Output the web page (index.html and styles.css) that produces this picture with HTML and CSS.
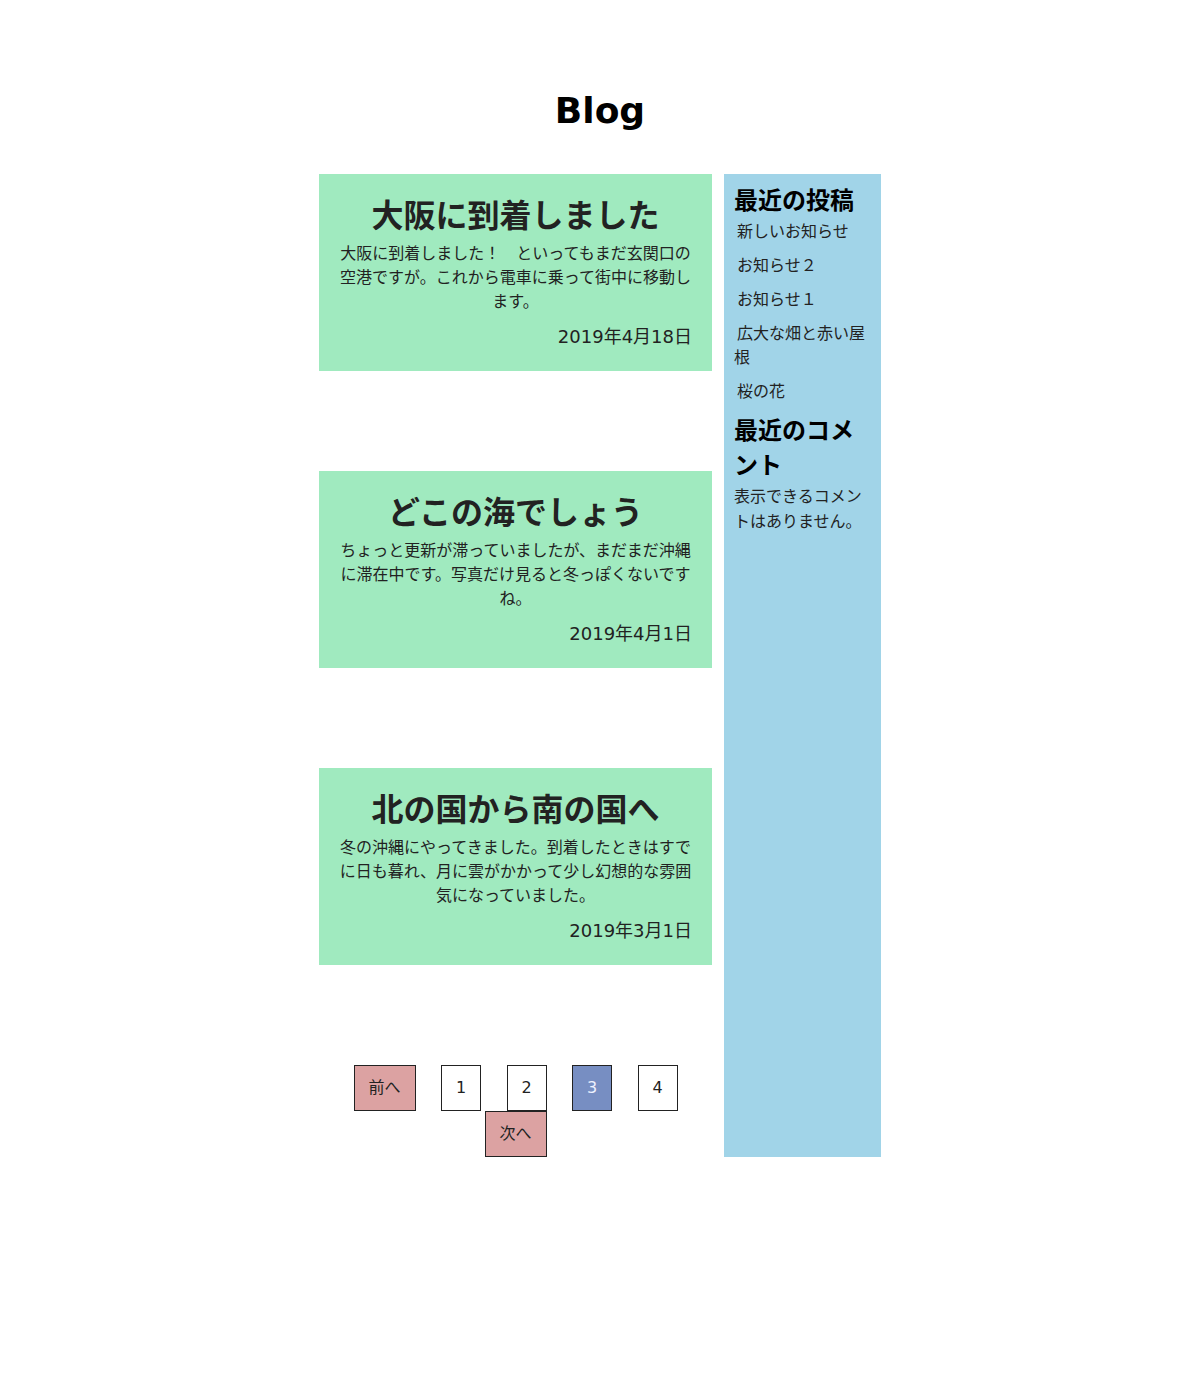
FILE: index.html
```html
<!DOCTYPE html>
<html lang="ja">
<head>
<meta charset="utf-8">
<title>Blog</title>
<link rel="stylesheet" href="styles.css">
</head>
<body>
<header class="site-header">
  <h1 class="site-title">Blog</h1>
</header>
<div class="layout">
  <main class="main">
    <article class="card">
      <h2 class="card-title">大阪に到着しました</h2>
      <p class="card-text">大阪に到着しました！　といってもまだ玄関口の空港ですが。これから電車に乗って街中に移動します。</p>
      <p class="card-date">2019年4月18日</p>
    </article>
    <article class="card">
      <h2 class="card-title">どこの海でしょう</h2>
      <p class="card-text">ちょっと更新が滞っていましたが、まだまだ沖縄に滞在中です。写真だけ見ると冬っぽくないですね。</p>
      <p class="card-date">2019年4月1日</p>
    </article>
    <article class="card">
      <h2 class="card-title">北の国から南の国へ</h2>
      <p class="card-text">冬の沖縄にやってきました。到着したときはすでに日も暮れ、月に雲がかかって少し幻想的な雰囲気になっていました。</p>
      <p class="card-date">2019年3月1日</p>
    </article>
    <nav class="pager">
      <a class="pager-item pager-wide">前へ</a>
      <a class="pager-item">1</a>
      <a class="pager-item">2</a>
      <span class="pager-item pager-current">3</span>
      <a class="pager-item">4</a>
      <a class="pager-item pager-wide">次へ</a>
    </nav>
  </main>
  <aside class="sidebar">
    <h3 class="side-title">最近の投稿</h3>
    <ul class="side-list">
      <li class="side-item">新しいお知らせ</li>
      <li class="side-item">お知らせ２</li>
      <li class="side-item">お知らせ１</li>
      <li class="side-item">広大な畑と赤い屋根</li>
      <li class="side-item">桜の花</li>
    </ul>
    <h3 class="side-title side-title-next">最近のコメント</h3>
    <p class="side-text">表示できるコメントはありません。</p>
  </aside>
</div>
</body>
</html>
```
FILE: styles.css
```css
html, body {
  margin: 0;
  padding: 0;
  background: #ffffff;
}
body {
  font-family: "DejaVu Sans", "Noto Sans CJK JP", sans-serif;
  color: #222222;
}
.site-header {
  padding-top: 87px;
  height: 87px;
}
.site-title {
  margin: 0;
  text-align: center;
  font-size: 36px;
  line-height: 48px;
  font-weight: bold;
  color: #000000;
}
.layout {
  display: flex;
  justify-content: center;
  gap: 12px;
  padding-bottom: 100px;
}
.main {
  width: 393px;
}
.card {
  background: #a0eabf;
  padding: 15px 20px 22px;
  margin-bottom: 100px;
  text-align: center;
}
.card-title {
  margin: 0 0 3px;
  font-family: "Noto Sans CJK JP", sans-serif;
  font-size: 32px;
  line-height: 48px;
  font-weight: bold;
  color: #222222;
}
.card-text {
  margin: 0;
  font-family: "Noto Sans CJK JP", sans-serif;
  font-size: 16px;
  line-height: 24px;
  color: #222222;
}
.card-date {
  margin: 13px 0 0;
  text-align: right;
  font-size: 18px;
  line-height: 24px;
  color: #222222;
}
.pager {
  display: flex;
  flex-wrap: wrap;
  justify-content: center;
  column-gap: 25.5px;
  row-gap: 0;
}
.pager-item {
  box-sizing: border-box;
  display: flex;
  align-items: center;
  justify-content: center;
  width: 40px;
  height: 46px;
  padding-bottom: 1px;
  border: 1px solid #222222;
  background: #ffffff;
  color: #222222;
  font-size: 16px;
  text-decoration: none;
}
.pager-wide {
  width: 62px;
  padding-bottom: 4px;
  background: #dca2a2;
  font-family: "Noto Sans CJK JP", sans-serif;
}
.pager-current {
  background: #778ec2;
  color: #eef2ff;
}
.sidebar {
  width: 157px;
  box-sizing: border-box;
  background: #a1d4e8;
  padding: 7px 10px 10px;
  font-family: "Noto Sans CJK JP", sans-serif;
}
.side-title {
  margin: 0 0 2px;
  font-size: 24px;
  line-height: 35px;
  font-weight: bold;
  color: #000000;
}
.side-title-next {
  margin: -1px 0 0;
}
.side-list {
  list-style: none;
  margin: 0;
  padding: 0;
}
.side-item {
  font-size: 16px;
  line-height: 24px;
  margin-bottom: 10px;
  text-indent: 3px;
  color: #222222;
}
.side-text {
  margin: 2px 0 0;
  font-size: 16px;
  line-height: 24.5px;
  color: #222222;
}
```
